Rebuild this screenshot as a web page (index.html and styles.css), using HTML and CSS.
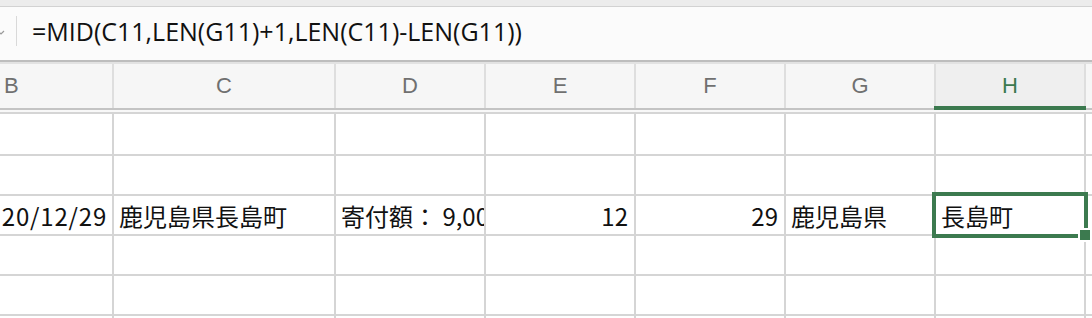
FILE: index.html
```html
<!DOCTYPE html>
<html lang="ja">
<head>
<meta charset="utf-8">
<title>Sheet</title>
<link rel="stylesheet" href="styles.css">
</head>
<body>
<div class="app">
  <div class="toolbar-strip"></div>
  <div class="formula-bar">
    <div class="name-tail">
      <svg width="6" height="10" viewBox="0 0 6 10"><path d="M-3 3 L1 7 L4 4" fill="none" stroke="#9a9a9a" stroke-width="1.2"/></svg>
    </div>
    <div class="fx-divider"></div>
    <div class="formula-text">=MID(C11,LEN(G11)+1,LEN(C11)-LEN(G11))</div>
  </div>
  <div class="sheet">
    <div class="col-headers">
      <div class="col-head left">B</div>
      <div class="col-head">C</div>
      <div class="col-head">D</div>
      <div class="col-head">E</div>
      <div class="col-head">F</div>
      <div class="col-head">G</div>
      <div class="col-head selected">H<span class="head-mark"></span></div>
      <div class="col-head"></div>
    </div>
    <div class="header-gap"></div>
    <div class="grid">
      <div class="cell"></div><div class="cell"></div><div class="cell"></div><div class="cell"></div><div class="cell"></div><div class="cell"></div><div class="cell"></div><div class="cell"></div>
      <div class="cell"></div><div class="cell"></div><div class="cell"></div><div class="cell"></div><div class="cell"></div><div class="cell"></div><div class="cell"></div><div class="cell"></div>
      <div class="cell num date">20/12/29</div>
      <div class="cell">鹿児島県長島町</div>
      <div class="cell">寄付額： 9,000円</div>
      <div class="cell num">12</div>
      <div class="cell num">29</div>
      <div class="cell">鹿児島県</div>
      <div class="cell active">長島町<span class="sel-box"></span><span class="fill-handle"></span></div>
      <div class="cell"></div>
      <div class="cell"></div><div class="cell"></div><div class="cell"></div><div class="cell"></div><div class="cell"></div><div class="cell"></div><div class="cell"></div><div class="cell"></div>
      <div class="cell"></div><div class="cell"></div><div class="cell"></div><div class="cell"></div><div class="cell"></div><div class="cell"></div><div class="cell"></div><div class="cell"></div>
      <div class="cell"></div><div class="cell"></div><div class="cell"></div><div class="cell"></div><div class="cell"></div><div class="cell"></div><div class="cell"></div><div class="cell"></div>
    </div>
  </div>
</div>
</body>
</html>
```

FILE: styles.css
```css
html, body {
  margin: 0;
  padding: 0;
  background: #ffffff;
}
body {
  width: 1092px;
  height: 318px;
  overflow: hidden;
}
.app {
  width: 1092px;
  height: 318px;
  overflow: hidden;
  display: flex;
  flex-direction: column;
}
.toolbar-strip {
  height: 6px;
  background: #ececec;
  border-bottom: 1px solid #d2d2d2;
  flex: none;
}
.formula-bar {
  height: 53px;
  flex: none;
  background: #fbfbfb;
  display: flex;
  align-items: center;
  border-bottom: 2px solid #bdbdbd;
  box-shadow: 0 2px 0 #e2e2e2;
}
.name-tail {
  width: 16px;
  height: 30px;
  display: flex;
  align-items: center;
  margin-top: -4px;
}
.name-tail svg {
  display: block;
}
.fx-divider {
  width: 1px;
  height: 30px;
  background: #d9d9d9;
  margin-top: -6px;
}
.formula-text {
  padding-left: 15px;
  font-family: "Open Sans", "Liberation Sans", sans-serif;
  font-size: 25px;
  color: #111;
  margin-top: -6px;
  white-space: nowrap;
}
.sheet {
  margin-top: 2px;
  flex: 1;
  display: flex;
  flex-direction: column;
}
.col-headers {
  display: grid;
  grid-template-columns: 112px 220px repeat(5, 148px) 1fr;
  column-gap: 2px;
  background: #dedede;
  height: 44px;
  border-bottom: 2px solid #c4c4c4;
}
.col-head {
  background: #f6f6f6;
  display: flex;
  align-items: center;
  justify-content: center;
  font-family: "Liberation Sans", Arial, sans-serif;
  font-size: 22px;
  color: #707070;
  position: relative;
}
.col-head.left {
  justify-content: flex-start;
  padding-left: 4px;
}
.col-head.selected {
  background: #efefef;
  color: #3c7a4f;
}
.head-mark {
  position: absolute;
  left: -2px;
  right: -2px;
  bottom: -2px;
  height: 4px;
  background: #3c7a4f;
}
.header-gap {
  height: 2px;
  background: #f8f8f8;
}
.grid {
  display: grid;
  grid-template-columns: 112px 220px repeat(5, 148px) 1fr;
  grid-template-rows: 40px repeat(4, 38px) 20px;
  gap: 2px;
  padding-top: 2px;
  background: #d5d5d5;
}
.cell {
  background: #ffffff;
  display: flex;
  align-items: center;
  padding: 0 5px;
  font-family: "Noto Sans CJK JP", "Noto Sans", sans-serif;
  font-size: 24px;
  color: #111;
  white-space: nowrap;
  overflow: hidden;
  position: relative;
}
.cell.num {
  justify-content: flex-end;
  padding-right: 6px;
}
.cell.date {
  padding-left: 0;
  letter-spacing: 0.8px;
  padding-right: 5px;
}
.cell.active {
  overflow: visible;
  z-index: 2;
}
.sel-box {
  position: absolute;
  left: -4px;
  top: -4px;
  right: -4px;
  bottom: -4px;
  border: 4px solid #3c7a4f;
}
.fill-handle {
  position: absolute;
  right: -8px;
  bottom: -8px;
  width: 10px;
  height: 10px;
  background: #3c7a4f;
  border: 2px solid #ffffff;
}
```
